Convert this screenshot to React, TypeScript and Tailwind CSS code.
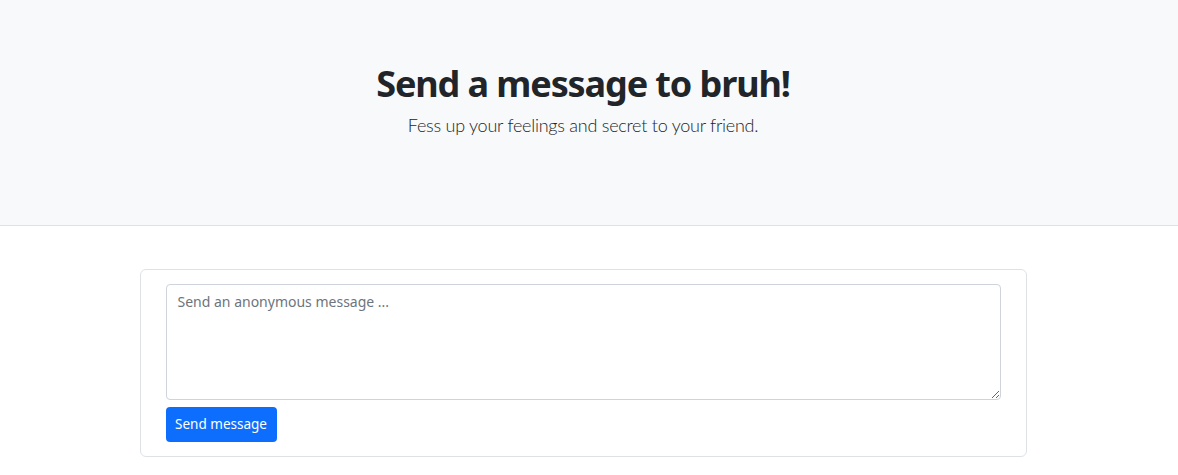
import React, { useState } from "react";

export default function App() {
  const [msg, setMsg] = useState("");

  return (
    <div className="min-h-screen bg-white text-[#212529] font-['Noto_Sans',sans-serif]">
      <header className="w-full bg-[#f8f9fa] border-b border-[#dee2e6] h-[226px]">
        <div className="w-[1166px] pt-[62px] text-center">
          <h1 className="text-[36px] leading-[43px] font-bold tracking-[-1.1px]">Send a message to bruh!</h1>
          <p className="mt-[7px] font-['Lato',sans-serif] text-[18px] leading-[27px] font-light tracking-[-0.25px]">
            Fess up your feelings and secret to your friend.
          </p>
        </div>
      </header>

      <div className="w-[1166px] pt-[43px]">
        <div className="mx-auto w-[887px] border border-[#dee2e6] rounded-[6px] px-[25px] pt-[14px] pb-[14px]">
          <textarea
            value={msg}
            onChange={(e) => setMsg(e.target.value)}
            placeholder="Send an anonymous message ..."
            className="block w-full h-[116px] border border-[#ced4da] rounded-[4px] px-[11px] py-[6px] text-[14px] leading-[21px] placeholder:text-[#6c757d] outline-none"
          />
          <button className="mt-[7px] h-[35px] w-[111px] rounded-[4px] bg-[#0d6efd] text-white text-[13.5px]">
            Send message
          </button>
        </div>
      </div>
    </div>
  );
}
